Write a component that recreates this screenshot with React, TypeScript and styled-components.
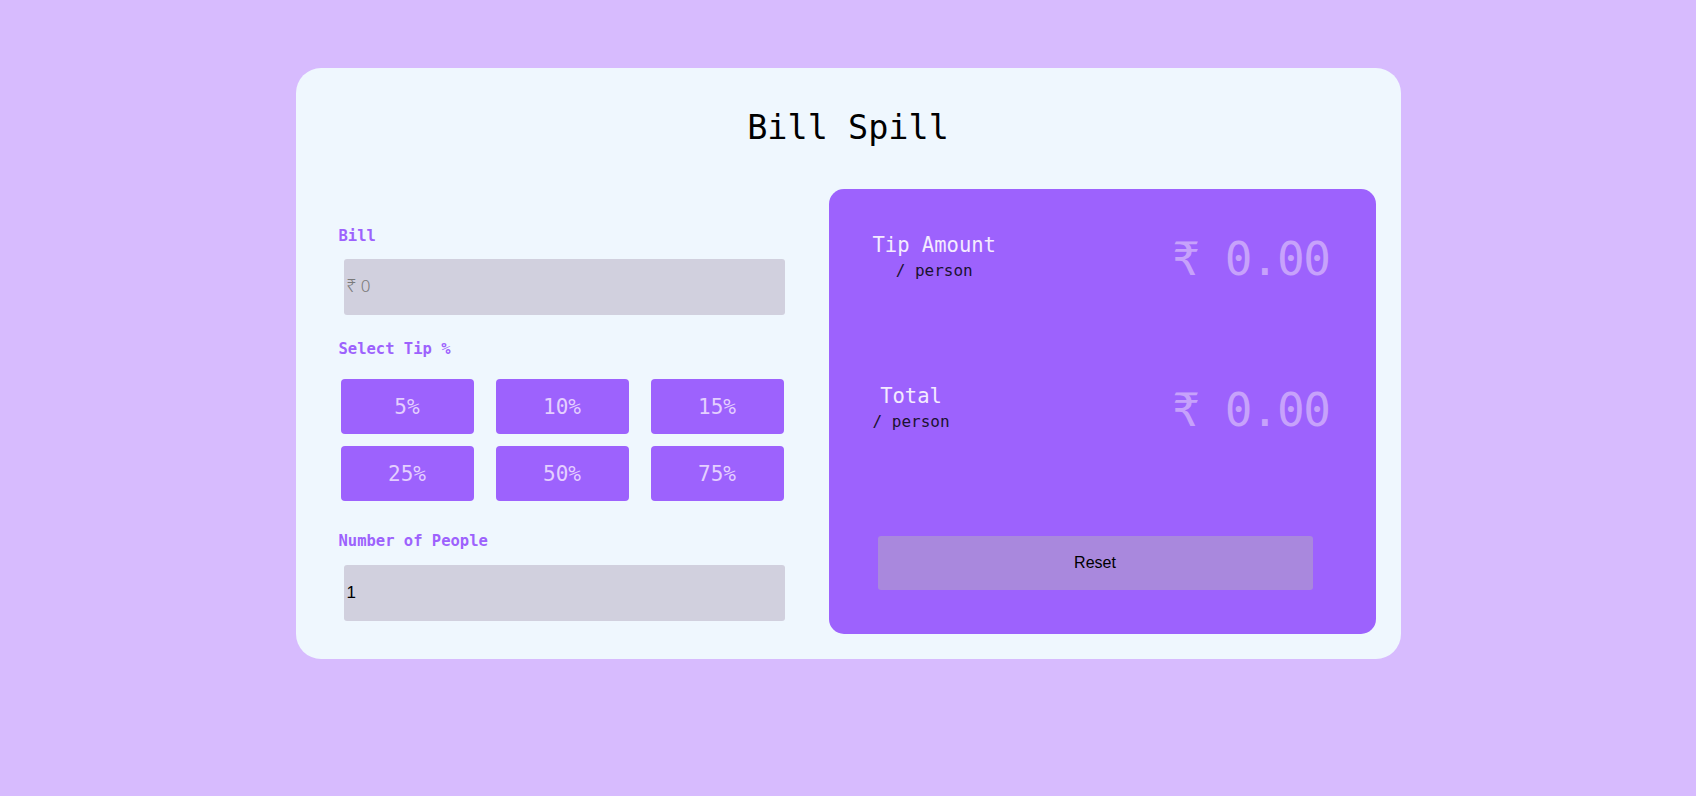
import React from "react";
import styled, { createGlobalStyle } from "styled-components";

const Global = createGlobalStyle`
  html, body { margin: 0; padding: 0; background: #d7bbfe; }
  body { font-family: "DejaVu Sans Mono", monospace; }
  * { box-sizing: border-box; }
`;

const Page = styled.div`
  padding-top: 68px;
  min-height: 796px;
`;

const Card = styled.div`
  width: 1105px;
  height: 591px;
  margin: 0 auto;
  background: #eff7fe;
  border-radius: 25px;
  padding: 40px 25px 25px 43px;
`;

const Title = styled.h1`
  margin: 0 -25px 0 -43px;
  font-family: "DejaVu Sans Mono", monospace;
  font-weight: 400;
  font-size: 33.5px;
  line-height: 40px;
  text-align: center;
  color: #000;
`;

const Body = styled.div`
  display: flex;
  gap: 44px;
  margin-top: 41px;
`;

const Left = styled.div`
  width: 446px;
  flex: none;
  padding-top: 38px;
  display: flex;
  flex-direction: column;
  align-items: flex-start;
`;

const Label = styled.label<{ $top?: number }>`
  font-family: "DejaVu Sans Mono", monospace;
  font-weight: 700;
  font-size: 15.5px;
  line-height: 18px;
  color: #9d62fd;
  margin-top: ${(p) => p.$top ?? 0}px;
`;

const Field = styled.input<{ $top: number }>`
  margin: ${(p) => p.$top}px 0 0 5px;
  width: 441px;
  height: 56px;
  border: none;
  border-radius: 3px;
  background: #d1d0de;
  padding: 0 0 0 3px;
  font-family: "Liberation Sans", Arial, sans-serif;
  font-size: 17px;
  color: #000;
  outline: none;
  &::placeholder { color: #7a7a7a; font-family: "Noto Sans", sans-serif; font-weight: 300; }
`;

const TipGrid = styled.div`
  margin: 21px 0 0 2px;
  display: grid;
  grid-template-columns: repeat(3, 133px);
  grid-auto-rows: 55px;
  column-gap: 22px;
  row-gap: 12px;
`;

const TipButton = styled.button`
  border: none;
  border-radius: 4px;
  background: #9d62fd;
  color: #e4cfff;
  font-family: "DejaVu Sans Mono", monospace;
  font-size: 21px;
  padding: 0;
  cursor: pointer;
`;

const Panel = styled.div`
  width: 547px;
  height: 445px;
  flex: none;
  background: #9d62fd;
  border-radius: 15px;
  padding: 43px 46px 44px 44px;
  display: flex;
  flex-direction: column;
`;

const Row = styled.div`
  height: 151px;
  flex: none;
  display: flex;
  justify-content: space-between;
  align-items: flex-start;
`;

const LabelBlock = styled.div`
  text-align: center;
  font-family: "DejaVu Sans Mono", monospace;
`;

const Heading = styled.div`
  font-size: 20.5px;
  line-height: 26px;
  color: #f4ebff;
`;

const Per = styled.div`
  font-size: 16px;
  line-height: 26px;
  color: #1b1230;
`;

const Amount = styled.div`
  margin-top: 1px;
  font-family: "DejaVu Sans Mono", monospace;
  font-size: 46px;
  line-height: 52px;
  letter-spacing: -1.5px;
  color: #c7a2fb;
`;

const Reset = styled.button`
  margin: 2px 0 0 5px;
  width: 435px;
  height: 54px;
  flex: none;
  border: none;
  border-radius: 3px;
  background: #a988dd;
  color: #000;
  font-family: "Liberation Sans", Arial, sans-serif;
  font-size: 16px;
  cursor: pointer;
`;

const tips = ["5%", "10%", "15%", "25%", "50%", "75%"];

export default function App() {
  return (
    <>
      <Global />
      <Page>
        <Card>
          <Title>Bill Spill</Title>
          <Body>
            <Left>
              <Label>Bill</Label>
              <Field $top={14} placeholder="₹ 0" />
              <Label $top={25}>Select Tip %</Label>
              <TipGrid>
                {tips.map((t) => (
                  <TipButton key={t}>{t}</TipButton>
                ))}
              </TipGrid>
              <Label $top={31}>Number of People</Label>
              <Field $top={15} defaultValue="1" />
            </Left>
            <Panel>
              <Row>
                <LabelBlock>
                  <Heading>Tip Amount</Heading>
                  <Per>/ person</Per>
                </LabelBlock>
                <Amount>₹ 0.00</Amount>
              </Row>
              <Row>
                <LabelBlock>
                  <Heading>Total</Heading>
                  <Per>/ person</Per>
                </LabelBlock>
                <Amount>₹ 0.00</Amount>
              </Row>
              <Reset>Reset</Reset>
            </Panel>
          </Body>
        </Card>
      </Page>
    </>
  );
}
